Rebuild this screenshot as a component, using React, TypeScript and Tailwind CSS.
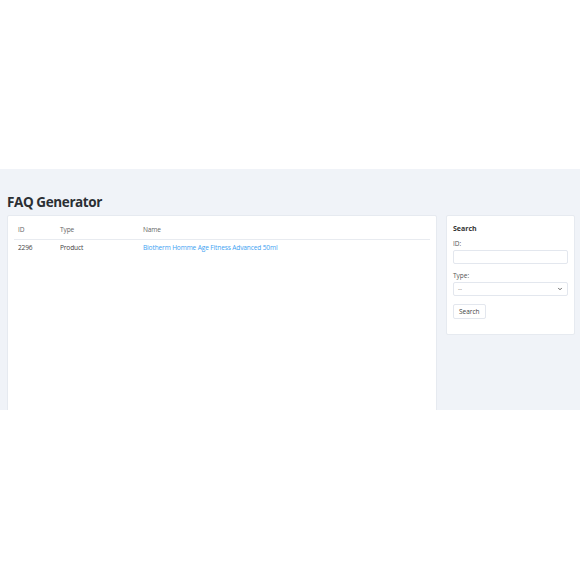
import { ChevronDown } from "lucide-react";

const rows = [
  { id: "2296", type: "Product", name: "Biotherm Homme Age Fitness Advanced 50ml" },
];

export default function App() {
  return (
    <div
      className="h-[580px] bg-white"
      style={{ fontFamily: '"Open Sans", "Noto Sans", sans-serif' }}
    >
      <div className="h-[169px]" />
      <section className="h-[241px] overflow-hidden bg-[#f0f3f8] pl-[7px] pr-[5px]">
        <h1 className="pt-[23px] text-[13.5px] font-bold leading-[20px] tracking-[-0.4px] text-[#2b2f33]">
          FAQ Generator
        </h1>
        <div className="mt-[3px] flex items-start gap-[9px]">
          <div className="h-[300px] flex-1 rounded-[2px] border border-[#e6eaf0] bg-white px-[6px] pt-[9px]">
            <table className="w-full text-left text-[6.6px] tracking-[-0.15px] text-[#444]">
              <thead>
                <tr className="border-b border-[#e8ebf0] text-[#666]">
                  <th className="w-[42px] px-[4px] pb-[4px] font-normal">ID</th>
                  <th className="w-[83px] px-[4px] pb-[4px] font-normal">Type</th>
                  <th className="px-[4px] pb-[4px] font-normal">Name</th>
                </tr>
              </thead>
              <tbody>
                {rows.map((r) => (
                  <tr key={r.id}>
                    <td className="px-[4px] pt-[3px] font-normal">{r.id}</td>
                    <td className="px-[4px] pt-[3px] font-normal">{r.type}</td>
                    <td className="px-[4px] pt-[3px]">
                      <a href="#" className="text-[#3da2f2]">
                        {r.name}
                      </a>
                    </td>
                  </tr>
                ))}
              </tbody>
            </table>
          </div>
          <div className="w-[129px] rounded-[2px] border border-[#e6eaf0] bg-white px-[6px] pt-[8px] pb-[14px]">
            <h3 className="text-[7px] font-bold leading-[10px] text-[#333]">Search</h3>
            <label className="mt-[5px] block text-[6.5px] leading-[9px] text-[#555]">ID:</label>
            <input className="mt-[2px] block h-[14px] w-full rounded-[2px] border border-[#e3e7ee] bg-white" />
            <label className="mt-[7px] block text-[6.5px] leading-[9px] text-[#555]">Type:</label>
            <div className="mt-[2px] flex h-[14px] items-center justify-between rounded-[2px] border border-[#e3e7ee] px-[4px] text-[6px] text-[#555]">
              <span>--</span>
              <ChevronDown className="h-[6px] w-[6px] text-[#333]" strokeWidth={3} />
            </div>
            <button className="mt-[6px] h-[15px] rounded-[2px] border border-[#e3e7ee] bg-white px-[5px] text-[6.5px] text-[#444]">
              Search
            </button>
          </div>
        </div>
      </section>
    </div>
  );
}
